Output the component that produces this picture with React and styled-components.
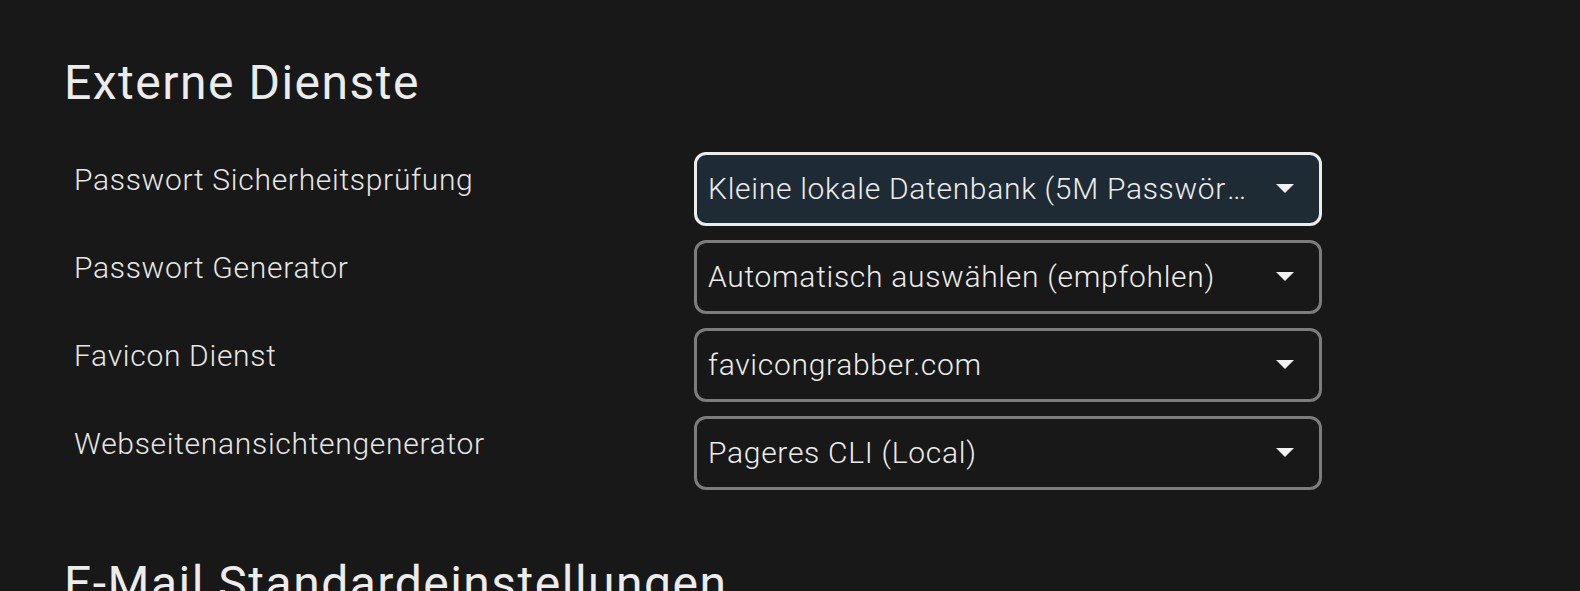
import React from "react";
import styled, { createGlobalStyle } from "styled-components";

const GlobalStyle = createGlobalStyle`
  html, body {
    margin: 0;
    padding: 0;
    background: #181818;
    font-family: Roboto, "Noto Sans", sans-serif;
    color: #ececec;
    overflow: hidden;
  }
`;

const Page = styled.div`
  padding: 54px 64px 0;
  height: 591px;
  box-sizing: border-box;
  overflow: hidden;
`;

const Section = styled.section`
  margin-bottom: 65px;
`;

const SectionTitle = styled.h2`
  margin: 0 0 40px;
  font-size: 48px;
  line-height: 1.2;
  font-weight: 400;
  letter-spacing: 1.5px;
  color: #ececec;
`;

const SettingsGrid = styled.div`
  display: grid;
  grid-template-columns: 630px 628px;
  row-gap: 14px;
`;

const Label = styled.div`
  padding: 10px 10px 0;
  font-size: 30px;
  line-height: 1.2;
  font-weight: 300;
  letter-spacing: 0.7px;
  color: #e6e6e6;
`;

const SelectBox = styled.div`
  height: 74px;
  box-sizing: border-box;
  display: flex;
  align-items: center;
  gap: 26px;
  padding: 0 24px 0 11px;
  border: 3px solid ${(p) => (p.$focused ? "#ececec" : "#7c7c7c")};
  border-radius: 12px;
  background: ${(p) => (p.$focused ? "#1f2b34" : "transparent")};
`;

const SelectValue = styled.span`
  flex: 1;
  min-width: 0;
  font-size: 30px;
  font-weight: 300;
  letter-spacing: 0.7px;
  color: #ececec;
  white-space: nowrap;
  overflow: hidden;
  text-overflow: ellipsis;
`;

const Arrow = styled.svg`
  flex: none;
  width: 20px;
  height: 10px;
`;

const rows = [
  { label: "Passwort Sicherheitsprüfung", value: "Kleine lokale Datenbank (5M Passwörter)", focused: true },
  { label: "Passwort Generator", value: "Automatisch auswählen (empfohlen)" },
  { label: "Favicon Dienst", value: "favicongrabber.com" },
  { label: "Webseitenansichtengenerator", value: "Pageres CLI (Local)" },
];

export default function App() {
  return (
    <>
      <GlobalStyle />
      <Page>
        <Section>
          <SectionTitle>Externe Dienste</SectionTitle>
          <SettingsGrid>
            {rows.map((r) => (
              <React.Fragment key={r.label}>
                <Label>{r.label}</Label>
                <SelectBox $focused={r.focused}>
                  <SelectValue>{r.value}</SelectValue>
                  <Arrow viewBox="0 0 20 10">
                    <path d="M1 0 L19 0 L10 9 Z" fill="#f2f2f2" />
                  </Arrow>
                </SelectBox>
              </React.Fragment>
            ))}
          </SettingsGrid>
        </Section>
        <Section>
          <SectionTitle>E-Mail Standardeinstellungen</SectionTitle>
        </Section>
      </Page>
    </>
  );
}
